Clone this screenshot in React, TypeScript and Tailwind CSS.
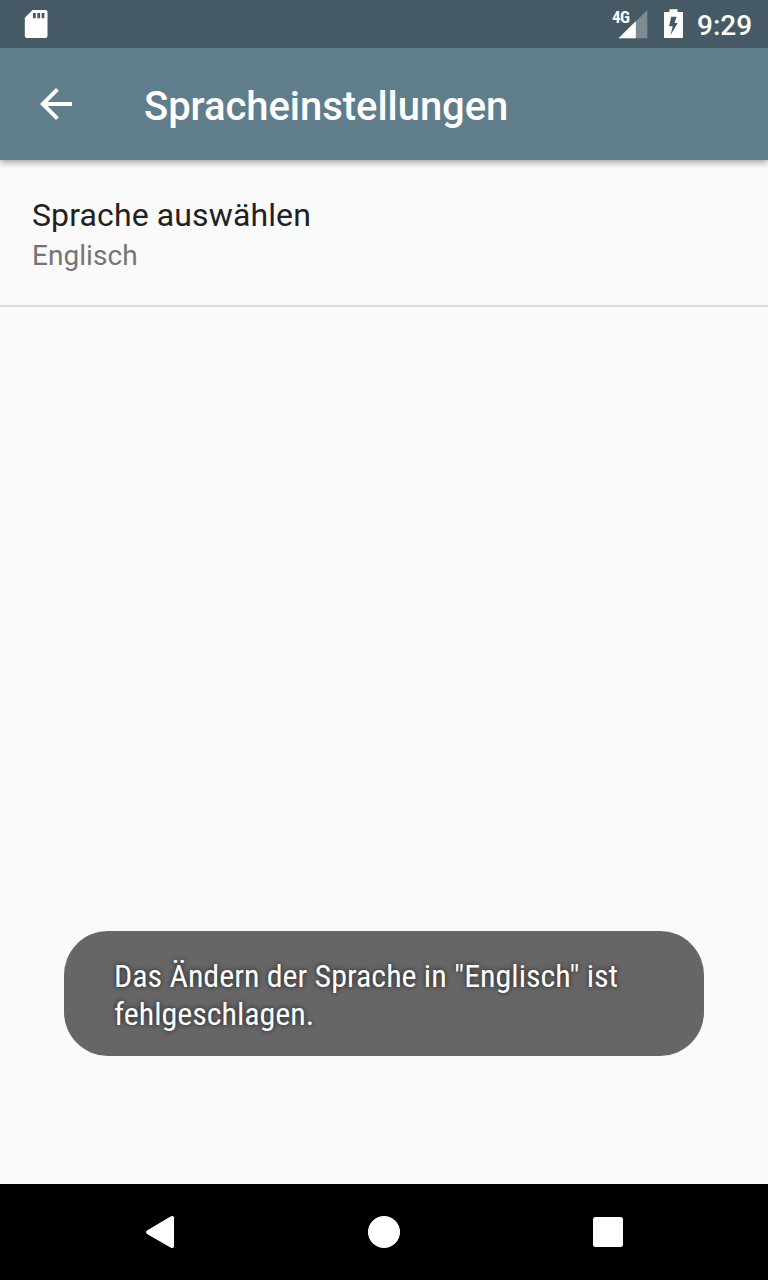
export default function App() {
  return (
    <div className="flex h-[1280px] w-[768px] flex-col overflow-hidden bg-[#fafafa] font-['Roboto',sans-serif]">
      <header className="relative flex-none bg-[#607d8b] shadow-[0_2px_7px_rgba(0,0,0,0.4)]">
        <div className="flex h-12 items-center bg-[#455a64] text-white">
          <svg className="ml-6 h-12 w-6" viewBox="0 0 24 48">
            <path fill="#fff" fillRule="evenodd" d="M8.500 10H21.500a2 2 0 0 1 2 2v24A2 2 0 0 1 21.500 38H2.800a2 2 0 0 1-2-2V17.700ZM9 13v5.300h2.800V13Zm4.300 0v5.300h2.800V13Zm4.300 0v5.300h2.800V13Z" />
          </svg>
          <div className="ml-auto flex items-center">
            <div className="relative h-12 w-[37px]">
              <svg className="h-12 w-[37px]" viewBox="0 0 37 48">
                <path fill="#fff" fillOpacity="0.3" d="M36.300 10v28.300H7.500Z" />
                <path fill="#fff" d="M24.800 21.300v17H7.500Z" />
              </svg>
              <span className="absolute top-[8px] left-[1px] font-['Roboto_Condensed','Roboto',sans-serif] text-[17px] leading-[19px] font-bold tracking-[-0.5px]">4G</span>
            </div>
            <svg className="ml-4 h-12 w-5" viewBox="0 0 20 48">
              <path fill="#fff" fillRule="evenodd" d="M5.500 9.300h8V12H19v26H0V12H5.500ZM7.200 16.700H12.700L10.500 23H13.700L6.500 35.300L8.700 26.300H5Z" />
            </svg>
            <span className="mt-[4px] ml-[13px] w-[71px] text-[28px] leading-8 font-medium">9:29</span>
          </div>
        </div>
        <div className="flex h-28 items-center">
          <svg className="ml-8 h-12 w-12" viewBox="0 0 24 24">
            <path fill="#fff" d="M20 11H7.830l5.590-5.590L12 4l-8 8 8 8 1.410-1.410L7.830 13H20v-2z" />
          </svg>
          <h1 className="mt-[6px] ml-16 text-[40px] leading-[48px] font-medium tracking-[-0.05px] text-white">Spracheinstellungen</h1>
        </div>
      </header>
      <main className="flex flex-1 flex-col">
        <div className="flex h-[147px] flex-none flex-col border-b-2 border-[#dadada] px-8 pt-9">
          <span className="text-[32px] leading-[38px] tracking-[0.12px] text-[#212121]">Sprache auswählen</span>
          <span className="mt-[5px] text-[28px] leading-[34px] tracking-[0.05px] text-[#757575]">Englisch</span>
        </div>
        <div className="mx-16 mt-auto mb-32 flex h-[125px] flex-col rounded-[44px] bg-[#666666] px-[50px] pt-[26px] text-white">
          <div className="font-['Roboto_Condensed','Roboto',sans-serif] text-[32px] leading-[38px] tracking-[-0.02px] whitespace-nowrap [text-shadow:0_0_5px_rgba(0,0,0,0.75)]">
            Das Ändern der Sprache in "Englisch" ist<br />fehlgeschlagen.
          </div>
        </div>
      </main>
      <nav className="flex h-24 flex-none items-center justify-between bg-black px-[136px]">
        <svg className="h-12 w-12" viewBox="0 0 48 48"><path fill="#fff" d="M34.500 8.500Q38 7 38 10V38q0 3-3.500 1.500L11 26q-2-2 0-3.500Z" /></svg>
        <svg className="h-12 w-12" viewBox="0 0 48 48"><circle cx="24" cy="24" r="16" fill="#fff" /></svg>
        <svg className="h-12 w-12" viewBox="0 0 48 48"><rect x="9" y="9" width="30" height="30" rx="2.500" fill="#fff" /></svg>
      </nav>
    </div>
  );
}
